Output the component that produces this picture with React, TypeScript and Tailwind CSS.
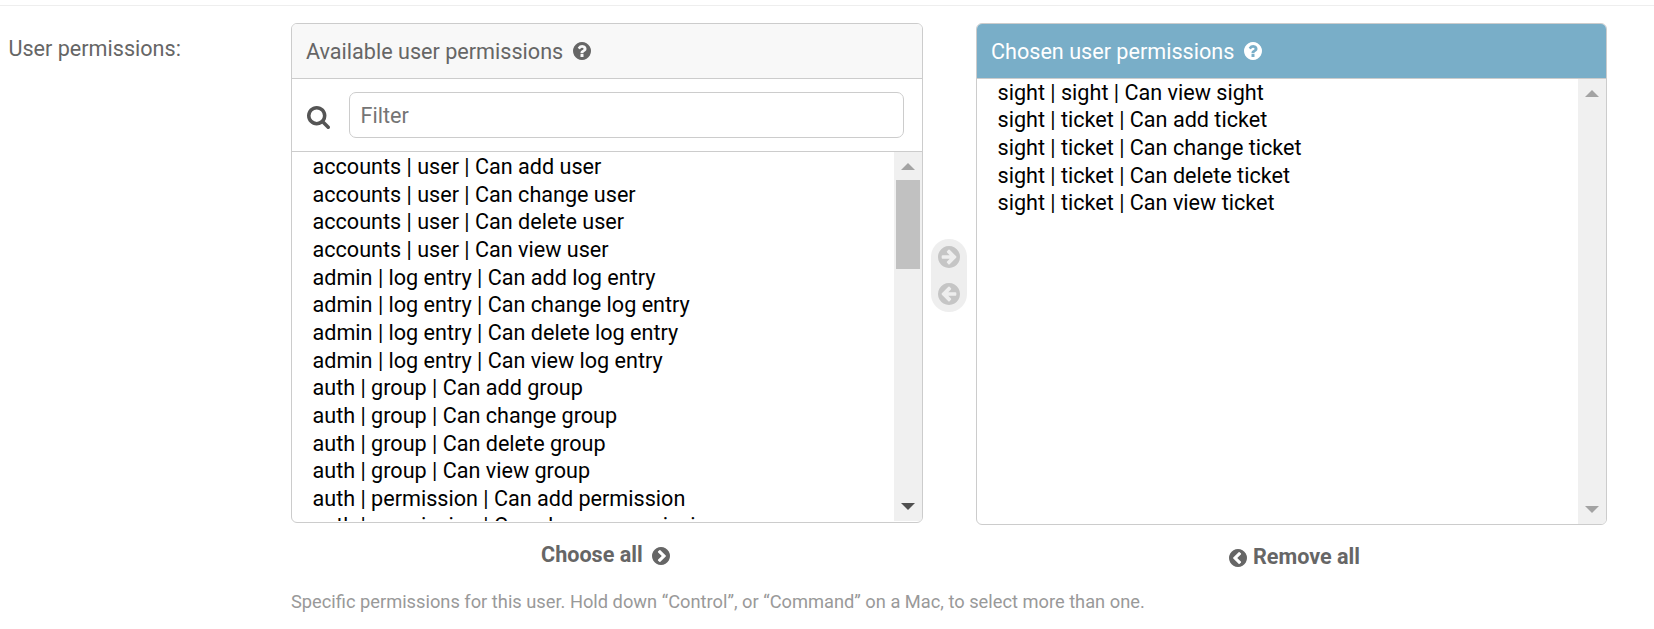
import React from "react";

const DISC =
  "m1664 896q0 209-103 385.5t-279.5 279.5-385.5 103-385.5-103-279.5-279.5-103-385.5 103-385.5 279.5-279.5 385.5-103 385.5 103 279.5 279.5 103 385.5z";
const QUESTION =
  "M1024 1376v-192q0-14-9-23t-23-9h-192q-14 0-23 9t-9 23v192q0 14 9 23t23 9h192q14 0 23-9t9-23zm256-672q0-88-55.5-163t-138.5-116-170-41q-243 0-371 213-15 24 8 42l132 100q7 6 19 6 16 0 25-12 53-68 86-92 34-24 86-24 48 0 85.5 26t37.5 59q0 38-20 61t-68 45q-63 28-115.5 86.5t-52.5 125.5v36q0 14 9 23t23 9h192q14 0 23-9t9-23q0-19 21.5-49.5t54.5-49.5q32-18 49-28.5t46-35 44.5-48 28-60.5 12.5-81z";
const ARROW =
  "M1413 896q0-27-18-45l-91-91-362-362q-18-18-45-18t-45 18l-91 91q-18 18-18 45t18 45l189 189h-502q-26 0-45 19t-19 45v128q0 26 19 45t45 19h502l-189 189q-19 19-19 45t19 45l91 91q18 18 45 18t45-18l362-362 91-91q18-18 18-45z";
const CHEVRON =
  "M845 1395l454-454q19-19 19-45t-19-45l-454-454q-19-19-45-19t-45 19l-102 102q-19 19-19 45t19 45l307 307-307 307q-19 19-19 45t19 45l102 102q19 19 45 19t45-19z";
const MAGNIFIER =
  "M1216 832q0-185-131.5-316.5t-316.5-131.5-316.5 131.5-131.5 316.5 131.5 316.5 316.5 131.5 316.5-131.5 131.5-316.5zm512 832q0 52-38 90t-90 38q-54 0-90-38l-343-342q-179 124-399 124-143 0-273.5-55.5t-225-150-150-225-55.5-273.5 55.5-273.5 150-225 225-150 273.5-55.5 273.5 55.5 225 150 150 225 55.5 273.5q0 220-124 399l343 343q37 37 37 90z";

function DiscIcon({ glyph, className }: { glyph: string; className: string }) {
  return (
    <svg viewBox="128 128 1536 1536" className={className} fill="currentColor">
      <path fillRule="evenodd" d={`${glyph} M0 0${DISC}`} />
    </svg>
  );
}

const available = [
  "accounts | user | Can add user",
  "accounts | user | Can change user",
  "accounts | user | Can delete user",
  "accounts | user | Can view user",
  "admin | log entry | Can add log entry",
  "admin | log entry | Can change log entry",
  "admin | log entry | Can delete log entry",
  "admin | log entry | Can view log entry",
  "auth | group | Can add group",
  "auth | group | Can change group",
  "auth | group | Can delete group",
  "auth | group | Can view group",
  "auth | permission | Can add permission",
  "auth | permission | Can change permission",
];

const chosen = [
  "sight | sight | Can view sight",
  "sight | ticket | Can add ticket",
  "sight | ticket | Can change ticket",
  "sight | ticket | Can delete ticket",
  "sight | ticket | Can view ticket",
];

function Options({ items, className }: { items: string[]; className: string }) {
  return (
    <ul className={`min-w-0 flex-1 overflow-hidden pl-[20.5px] text-black ${className}`}>
      {items.map((item) => (
        <li key={item} className="h-[27.67px] whitespace-nowrap leading-[27.67px]">
          {item}
        </li>
      ))}
    </ul>
  );
}

function Triangle({ down, className }: { down?: boolean; className: string }) {
  return (
    <svg width="14" height="7" viewBox="0 0 14 7" className={className} fill="currentColor">
      <path d={down ? "M0 0H14L7 7Z" : "M0 7H14L7 0Z"} />
    </svg>
  );
}

export default function App() {
  return (
    <div className="h-[629px] w-[1654px] overflow-hidden bg-white pt-[5px] font-['Roboto',sans-serif] text-[21.6px] text-[#666]">
      <div className="flex border-t border-[#eee] pt-[17px]">
        <div className="w-[291px] shrink-0 pl-[8.4px] pt-[12px] leading-[28px]">User permissions:</div>
        <div>
          <div className="flex items-start">
            <div className="w-[632px]">
              <div className="flex h-[500px] flex-col overflow-hidden rounded-[6px] border border-[#ccc]">
                <h2 className="flex h-[55px] items-center border-b border-[#ccc] bg-[#f8f8f8] pl-[14px]">
                  <span className="pt-[2px]">Available user permissions</span>
                  <DiscIcon glyph={QUESTION} className="ml-[10px] size-[18px]" />
                </h2>
                <div className="flex h-[73px] items-center border-b border-[#ccc] pl-[15px]">
                  <svg viewBox="64 128 1664 1664" className="mt-[5px] size-[23px]" fill="#555">
                    <path d={MAGNIFIER} />
                  </svg>
                  <div className="ml-[19px] flex h-[46px] w-[555px] items-center rounded-[7px] border border-[#ccc] pl-[10.6px] pt-[2px] text-[#757575]">
                    Filter
                  </div>
                </div>
                <div className="flex h-[369px] overflow-hidden">
                  <Options items={available} className="pt-[0.95px]" />
                  <div className="flex w-[28px] flex-col items-center bg-[#f0f0f0]">
                    <Triangle className="mt-[11px] text-[#a3a3a3]" />
                    <div className="mt-[10px] h-[89px] w-[24px] bg-[#c1c1c1]" />
                    <Triangle down className="mb-[11px] mt-auto text-[#505050]" />
                  </div>
                </div>
              </div>
              <div className="mt-[18px] flex h-[28px] items-center pl-[250px] font-bold">
                Choose all
                <DiscIcon glyph={CHEVRON} className="ml-[9px] mt-[2px] size-[18px]" />
              </div>
            </div>
            <div className="ml-[8px] mr-[9px] mt-[216px] flex h-[73px] w-[36px] flex-col items-center justify-center gap-[15px] rounded-full bg-[#eee] text-[#c5c5c5]">
              <DiscIcon glyph={ARROW} className="size-[22px]" />
              <DiscIcon glyph={ARROW} className="size-[22px] rotate-180" />
            </div>
            <div className="w-[631px]">
              <div className="flex h-[502px] flex-col overflow-hidden rounded-[6px] border border-[#ccc]">
                <h2 className="flex h-[55px] items-center border-b border-[#ccc] bg-[#79aec8] pl-[14px] text-white">
                  <span className="pt-[2px]">Chosen user permissions</span>
                  <DiscIcon glyph={QUESTION} className="ml-[10px] size-[18px]" />
                </h2>
                <div className="flex flex-1">
                  <Options items={chosen} className="-mt-[0.3px]" />
                  <div className="flex w-[28px] flex-col items-center justify-between bg-[#f0f0f0] py-[11px] text-[#a3a3a3]">
                    <Triangle className="" />
                    <Triangle down className="" />
                  </div>
                </div>
              </div>
              <div className="mt-[18px] flex h-[28px] items-center pl-[253px] font-bold">
                <DiscIcon glyph={CHEVRON} className="mr-[6px] mt-[2px] size-[18px] rotate-180" />
                Remove all
              </div>
            </div>
          </div>
          <p className="mt-[19px] text-[18.27px] leading-[24px] text-[#999]">
            Specific permissions for this user. Hold down “Control”, or “Command” on a Mac, to select more than one.
          </p>
        </div>
      </div>
    </div>
  );
}
